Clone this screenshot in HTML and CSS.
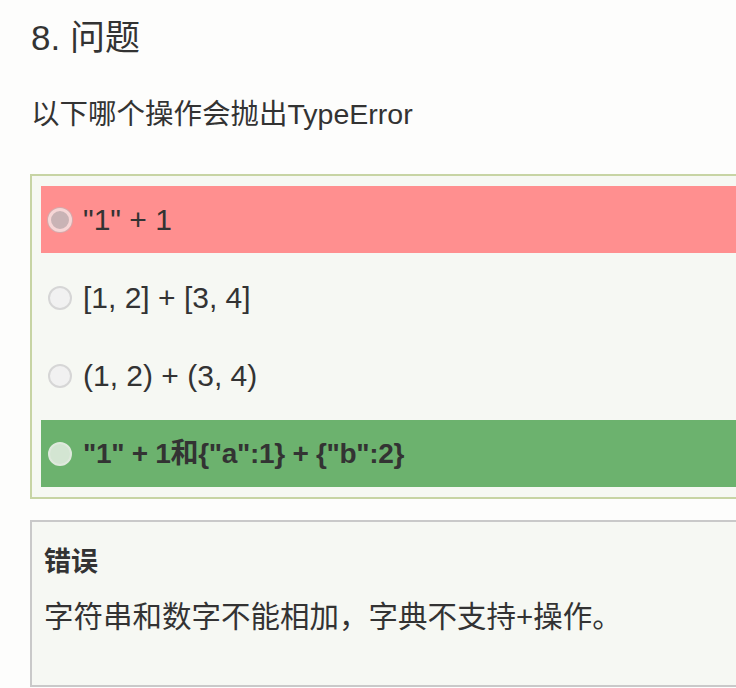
FILE: index.html
```html
<!DOCTYPE html>
<html lang="zh-CN">
<head>
<meta charset="utf-8">
<title>问题</title>
<link rel="stylesheet" href="styles.css">
</head>
<body>
<div class="page">
  <h1 class="title">8. 问题</h1>
  <p class="question">以下哪个操作会抛出TypeError</p>
  <div class="options">
    <div class="option option-wrong"><span class="radio radio-wrong"></span><span class="label">"1" + 1</span></div>
    <div class="option"><span class="radio"></span><span class="label">[1, 2] + [3, 4]</span></div>
    <div class="option"><span class="radio"></span><span class="label">(1, 2) + (3, 4)</span></div>
    <div class="option option-right"><span class="radio radio-right"></span><span class="label">"1" + 1和{"a":1} + {"b":2}</span></div>
  </div>
  <div class="explain">
    <div class="explain-title">错误</div>
    <div class="explain-text">字符串和数字不能相加，字典不支持+操作。</div>
  </div>
</div>
</body>
</html>
```
FILE: styles.css
```css
html, body {
  margin: 0;
  padding: 0;
  background: #fdfdfc;
  overflow: hidden;
}
body {
  font-family: "Liberation Sans", "Noto Sans CJK SC", sans-serif;
  color: #333;
}
.page {
  padding-left: 30px;
  width: 800px;
}
.title {
  margin: 18px 0 0 1px;
  font-size: 35px;
  font-weight: normal;
  line-height: 40px;
}
.question {
  margin: 36px 0 0 1px;
  font-size: 28.5px;
  line-height: 40px;
}
.options {
  margin-top: 40px;
  border: 2px solid #c7d4a4;
  background: #f6f8f3;
  padding: 10px 0 10px 9px;
  display: flex;
  flex-direction: column;
  gap: 11px;
}
.option {
  height: 67px;
  display: flex;
  align-items: center;
  padding-left: 7px;
  font-size: 30px;
}
.option-wrong {
  background: #ff8f8f;
}
.option-right {
  background: #6cb26e;
  font-weight: bold;
  font-size: 28px;
  letter-spacing: -0.3px;
}
.radio {
  box-sizing: border-box;
  width: 24px;
  height: 24px;
  border-radius: 50%;
  border: 2px solid #d6d6d6;
  background: #f1f1f1;
  margin-right: 11px;
  flex: none;
}
.radio-wrong {
  border: 3px solid #f6d6d6;
  background: #c9b3b5;
  box-shadow: 0 0 0 1px #d7a9ab;
}
.radio-right {
  border: 2px solid #dfe9dd;
  background: #d3e5d2;
}
.label {
  line-height: 40px;
  white-space: nowrap;
}
.explain {
  margin-top: 21px;
  border: 2px solid #c9c9c9;
  background: #f6f8f3;
  padding: 20px 0 48px 12px;
  font-size: 29.5px;
}
.explain-title {
  font-weight: bold;
  font-size: 27px;
  line-height: 40px;
}
.explain-text {
  margin-top: 15px;
  line-height: 40px;
}
```
